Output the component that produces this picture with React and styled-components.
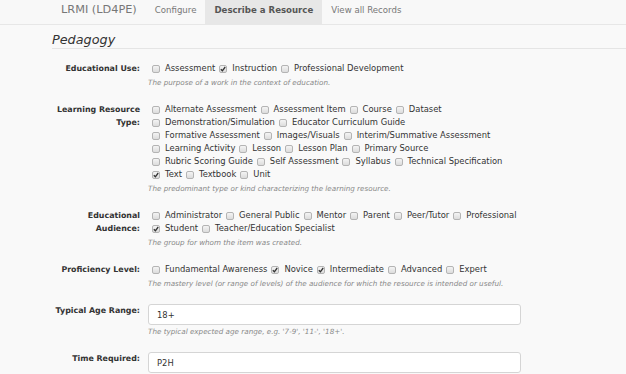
import React from "react";
import styled, { createGlobalStyle } from "styled-components";

const Global = createGlobalStyle`
  html, body { margin: 0; padding: 0; background: #f9f9f9; }
  body { font-family: "DejaVu Sans", Verdana, sans-serif; color: #333; overflow: hidden; }
  * { box-sizing: border-box; }
`;

const Navbar = styled.nav`
  display: flex;
  align-items: stretch;
  height: 25px;
  background: #f8f8f8;
  border-bottom: 1px solid #e7e7e7;
  padding-left: 52px;
`;

const Brand = styled.div`
  display: flex;
  align-items: center;
  padding: 0 9px 5px;
  font-size: 11.3px;
  color: #777;
`;

const NavItem = styled.div`
  display: flex;
  align-items: center;
  padding: 0 9px 5px;
  font-size: 8.6px;
  color: ${(p) => (p.$active ? "#555" : "#777")};
  font-weight: ${(p) => (p.$active ? "bold" : "normal")};
  background: ${(p) => (p.$active ? "#e7e7e7" : "transparent")};
`;

const Main = styled.main`
  padding-left: 52px;
`;

const Heading = styled.h2`
  margin: 7px 0 0;
  font-size: 12.8px;
  font-weight: normal;
  font-style: italic;
  color: #333;
  line-height: 15px;
  padding-bottom: 1px;
  border-bottom: 1px solid #e5e5e5;
`;

const Form = styled.div`
  padding-top: 13px;
  display: flex;
  flex-direction: column;
  gap: 14px;
`;

const Group = styled.div`
  display: grid;
  grid-template-columns: 88px 1fr;
  column-gap: 8px;
`;

const Label = styled.div`
  font-weight: bold;
  font-size: 7.9px;
  line-height: 13px;
  text-align: right;
  color: #333;
`;

const Field = styled.div`
  display: flex;
  flex-direction: column;
`;

const Options = styled.div`
  display: flex;
  flex-wrap: wrap;
  max-width: 372px;
  padding-left: 4px;
  font-size: 8.4px;
  line-height: 13px;
  color: #333;
`;

const Option = styled.span`
  display: inline-flex;
  align-items: center;
  white-space: nowrap;
  margin-right: 4px;
`;

const Box = styled.span`
  display: inline-flex;
  align-items: center;
  justify-content: center;
  width: 8px;
  height: 8px;
  margin-right: 5px;
  border: 1px solid #b4b4b4;
  border-radius: 2px;
  background: linear-gradient(#f4f4f4, #dcdcdc);
`;

const Help = styled.div`
  font-size: 7.2px;
  font-style: italic;
  color: #888;
  line-height: 12px;
  margin-top: ${(p) => (p.$afterInput ? "1px" : "2px")};
`;

const Input = styled.div`
  width: 373px;
  height: 21px;
  background: #fff;
  border: 1px solid #d5d5d5;
  border-radius: 3px;
  padding-left: 8px;
  display: flex;
  align-items: center;
  font-size: 8.4px;
  color: #333;
`;

const Row = styled.div`
  display: flex;
  width: 100%;
`;

const Check = () => (
  <svg width="6" height="6" viewBox="0 0 6 6">
    <path d="M0.8 3.2 L2.4 4.8 L5.2 1" fill="none" stroke="#333" strokeWidth="1.3" />
  </svg>
);

const CheckOption = ({ label, checked }) => (
  <Option>
    <Box>{checked && <Check />}</Box>
    {label}
  </Option>
);

const groups = [
  {
    label: "Educational Use:",
    options: [["Assessment"], ["Instruction", true], ["Professional Development"]],
    help: "The purpose of a work in the context of education.",
  },
  {
    label: "Learning Resource Type:",
    rows: [
      [["Alternate Assessment"], ["Assessment Item"], ["Course"], ["Dataset"]],
      [["Demonstration/Simulation"], ["Educator Curriculum Guide"]],
      [["Formative Assessment"], ["Images/Visuals"], ["Interim/Summative Assessment"]],
      [["Learning Activity"], ["Lesson"], ["Lesson Plan"], ["Primary Source"]],
      [["Rubric Scoring Guide"], ["Self Assessment"], ["Syllabus"], ["Technical Specification"]],
      [["Text", true], ["Textbook"], ["Unit"]],
    ],
    help: "The predominant type or kind characterizing the learning resource.",
  },
  {
    label: "Educational Audience:",
    rows: [
      [["Administrator"], ["General Public"], ["Mentor"], ["Parent"], ["Peer/Tutor"], ["Professional"]],
      [["Student", true], ["Teacher/Education Specialist"]],
    ],
    help: "The group for whom the item was created.",
  },
  {
    label: "Proficiency Level:",
    options: [["Fundamental Awareness"], ["Novice", true], ["Intermediate", true], ["Advanced"], ["Expert"]],
    help: "The mastery level (or range of levels) of the audience for which the resource is intended or useful.",
  },
];

export default function App() {
  return (
    <>
      <Global />
      <Navbar>
        <Brand>LRMI (LD4PE)</Brand>
        <NavItem>Configure</NavItem>
        <NavItem $active>Describe a Resource</NavItem>
        <NavItem>View all Records</NavItem>
      </Navbar>
      <Main>
        <Heading>Pedagogy</Heading>
        <Form>
          {groups.map((g) => (
            <Group key={g.label}>
              <Label>{g.label}</Label>
              <Field>
                <Options>
                  {g.options
                    ? g.options.map(([l, c]) => <CheckOption key={l} label={l} checked={c} />)
                    : g.rows.map((r, i) => (
                        <Row key={i}>
                          {r.map(([l, c]) => (
                            <CheckOption key={l} label={l} checked={c} />
                          ))}
                        </Row>
                      ))}
                </Options>
                <Help>{g.help}</Help>
              </Field>
            </Group>
          ))}
          <Group>
            <Label>Typical Age Range:</Label>
            <Field>
              <Input>18+</Input>
              <Help $afterInput>The typical expected age range, e.g. '7-9', '11-', '18+'.</Help>
            </Field>
          </Group>
          <Group>
            <Label>Time Required:</Label>
            <Field>
              <Input>P2H</Input>
            </Field>
          </Group>
        </Form>
      </Main>
    </>
  );
}
